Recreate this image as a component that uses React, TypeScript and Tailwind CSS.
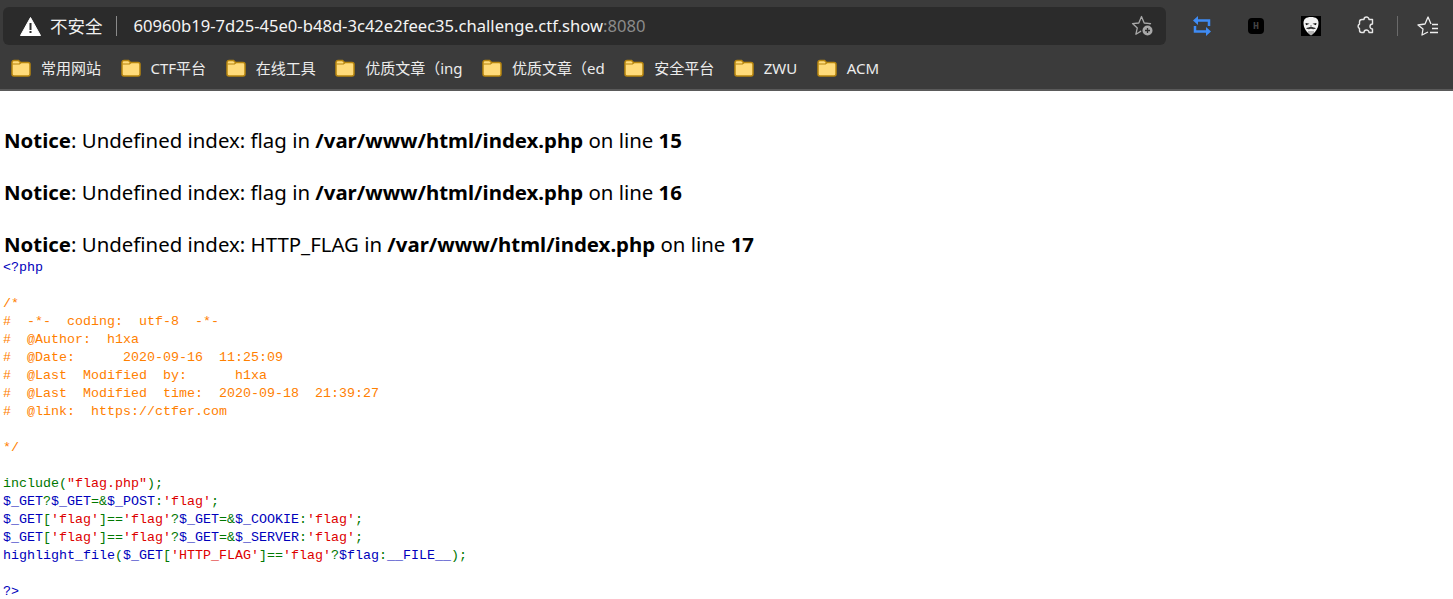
const bookmarks = ["常用网站", "CTF平台", "在线工具", "优质文章（ing", "优质文章（ed", "安全平台", "ZWU", "ACM"];

function Folder() {
  return (
    <svg width="20" height="18" viewBox="0 0 20 18" className="shrink-0">
      <path d="M1 3.500a2 2 0 0 1 2-2h4.500l2 2H17a2 2 0 0 1 2 2V15a2 2 0 0 1-2 2H3a2 2 0 0 1-2-2z" fill="#ffdb7a" stroke="#b8860f" strokeWidth="1.500" />
      <path d="M1.500 5h7l1.500-1.500" fill="none" stroke="#b8860f" strokeWidth="1.200" />
    </svg>
  );
}

function Mask() {
  return (
    <svg width="20" height="20" viewBox="0 0 20 20">
      <rect width="20" height="20" fill="#000" />
      <path d="M10 1c5 0 7.500 2 7.500 6 0 5-3 9.500-7.500 12.500C5.500 16.500 2.500 12 2.500 7c0-4 2.500-6 7.500-6z" fill="#f2f2f2" />
      <path d="M4.500 7l4 .8-3.500 1.500zM15.500 7l-4 .8 3.500 1.500z" fill="#111" />
      <path d="M5 12.500c2.500-2 7.500-2 10 0-2 .8-3.500 .8-5 .2-1.500 .6-3 .6-5-.2z" fill="#333" />
      <path d="M10 9v2M8 15v3M10 15v4M12 15v3" stroke="#555" strokeWidth="0.800" />
    </svg>
  );
}

function Toolbar() {
  return (
    <div className="flex h-[52px] items-center pl-[3px] pr-[14px]">
      <div className="flex h-[38px] w-[1164px] items-center rounded-md bg-[#2b2b2b] pl-[17px] pr-[11px]">
        <svg width="21" height="19" viewBox="0 0 21 19" className="shrink-0">
          <path d="M10.500 0.500 20.500 18.500H0.500z" fill="#fff" stroke="#fff" strokeLinejoin="round" />
          <path d="M9.500 6h2v7h-2zM9.500 14h2v2h-2z" fill="#2b2b2b" />
        </svg>
        <span className="ml-[9px] text-[17.500px] text-[#f0f0f0]">不安全</span>
        <span className="ml-[13px] h-[20px] w-[1px] bg-[#8a8a8a]" />
        <span className="ml-[17px] text-[16.600px] text-[#f4f4f4]">
          60960b19-7d25-45e0-b48d-3c42e2feec35.challenge.ctf.show<span className="text-[#8b8b8b]">:8080</span>
        </span>
        <svg width="24" height="22" viewBox="0 0 24 22" className="ml-auto shrink-0">
          <path d="M10.500 1.500 13.200 8l6.300.6-4.800 4.300 1.300 6.300-5.500-3.300-5.600 3.300 1.400-6.300L1.500 8.600 7.800 8z" fill="none" stroke="#a8a8a8" strokeWidth="1.300" strokeLinejoin="round" />
          <circle cx="16.500" cy="15.500" r="6.500" fill="#2b2b2b" />
          <circle cx="16.500" cy="15.500" r="5" fill="#a8a8a8" />
          <path d="M14 15.500h5M16.500 13v5" stroke="#2b2b2b" strokeWidth="1.300" />
        </svg>
      </div>
      <svg width="20" height="22" viewBox="0 0 20 22" className="ml-[26px] shrink-0">
        <path d="M5 5.500H17V11M3 11V16.500H15" fill="none" stroke="#3f8cf5" strokeWidth="2.500" />
        <path d="M6 1v9L1 5.500zM14 12v9l5-4.500z" fill="#3f8cf5" />
      </svg>
      <div className="ml-[36px] flex h-[16px] w-[16px] items-center justify-center rounded-sm bg-black text-[10px] font-bold text-[#444] [font-family:'Liberation_Mono',monospace]">H</div>
      <div className="ml-[37px]"><Mask /></div>
      <svg width="20" height="20" viewBox="0 0 20 20" className="ml-[35px] shrink-0">
        <path d="M6 3.500H8A2.500 2.500 0 1 1 13 3.500H16.500V8A2.500 2.500 0 0 0 16.500 13V16.500H13A2.500 2.500 0 0 0 8 16.500H5.500C4 16.500 3.500 15.500 3.500 14V12.500A2.500 2.500 0 0 1 3.500 8V6C3.500 4.500 4.500 3.500 6 3.500Z" fill="none" stroke="#e6e6e6" strokeWidth="1.400" strokeLinejoin="round" />
      </svg>
      <span className="ml-[21px] h-[20px] w-[1px] bg-[#6a6a6a]" />
      <svg width="22" height="20" viewBox="0 0 22 20" className="ml-[19px] shrink-0">
        <path d="M14 8 11 1 8 8 1 9l5 4-1 6 6-3" fill="none" stroke="#eeeeee" strokeWidth="1.300" strokeLinejoin="round" />
        <path d="M15 8.500h6M15 12.500h6M13 16.500h8" fill="none" stroke="#eeeeee" strokeWidth="1.300" />
      </svg>
    </div>
  );
}

function BookmarkBar() {
  return (
    <div className="flex h-[37px] items-start gap-[19.500px] pl-[11px] pt-[5px] text-[15px] text-[#ececec]">
      {bookmarks.map((b) => (
        <div key={b} className="flex items-center gap-[10px]">
          <Folder />
          <span>{b}</span>
        </div>
      ))}
    </div>
  );
}

function Notice({ msg, line }: { msg: string; line: number }) {
  return (
    <p className="mb-[26px] last:mb-0">
      <b>Notice</b>: Undefined index: {msg} in <b>/var/www/html/index.php</b> on line <b>{line}</b>
    </p>
  );
}

const G = "text-[#007700]";
const B = "text-[#0000bb]";
const R = "text-[#dd0000]";
const O = "text-[#ff8000]";

export default function App() {
  return (
    <div className="min-h-[599px] bg-white [font-family:'Noto_Sans','Noto_Sans_CJK_SC',sans-serif]">
      <div className="h-[91px] border-b-2 border-[#5a5a5a] bg-[#3b3b3b]">
        <Toolbar />
        <BookmarkBar />
      </div>
      <div className="pl-[4px] pt-[36px] text-[20.400px] leading-[26px] text-black">
        <Notice msg="flag" line={15} />
        <Notice msg="flag" line={16} />
        <Notice msg="HTTP_FLAG" line={17} />
      </div>
      <pre className="mt-[2px] pl-[3px] text-[13.330px] leading-[18px] [font-family:'Liberation_Mono',monospace]">
        <div className={B}>{"<?php"}</div>
        <div>&nbsp;</div>
        <div className={O}>/*</div>
        <div className={O}>#  -*-  coding:  utf-8  -*-</div>
        <div className={O}>#  @Author:  h1xa</div>
        <div className={O}>#  @Date:      2020-09-16  11:25:09</div>
        <div className={O}>#  @Last  Modified  by:      h1xa</div>
        <div className={O}>#  @Last  Modified  time:  2020-09-18  21:39:27</div>
        <div className={O}>#  @link:  https://ctfer.com</div>
        <div>&nbsp;</div>
        <div className={O}>*/</div>
        <div>&nbsp;</div>
        <div className={G}>include(<span className={R}>"flag.php"</span>);</div>
        <div className={B}>$_GET<span className={G}>?</span>$_GET<span className={G}>=&amp;</span>$_POST<span className={G}>:</span><span className={R}>'flag'</span><span className={G}>;</span></div>
        <div className={B}>$_GET<span className={G}>[</span><span className={R}>'flag'</span><span className={G}>]==</span><span className={R}>'flag'</span><span className={G}>?</span>$_GET<span className={G}>=&amp;</span>$_COOKIE<span className={G}>:</span><span className={R}>'flag'</span><span className={G}>;</span></div>
        <div className={B}>$_GET<span className={G}>[</span><span className={R}>'flag'</span><span className={G}>]==</span><span className={R}>'flag'</span><span className={G}>?</span>$_GET<span className={G}>=&amp;</span>$_SERVER<span className={G}>:</span><span className={R}>'flag'</span><span className={G}>;</span></div>
        <div className={B}>highlight_file<span className={G}>(</span>$_GET<span className={G}>[</span><span className={R}>'HTTP_FLAG'</span><span className={G}>]==</span><span className={R}>'flag'</span><span className={G}>?</span>$flag<span className={G}>:</span>__FILE__<span className={G}>);</span></div>
        <div>&nbsp;</div>
        <div className={B}>?&gt;</div>
      </pre>
    </div>
  );
}
